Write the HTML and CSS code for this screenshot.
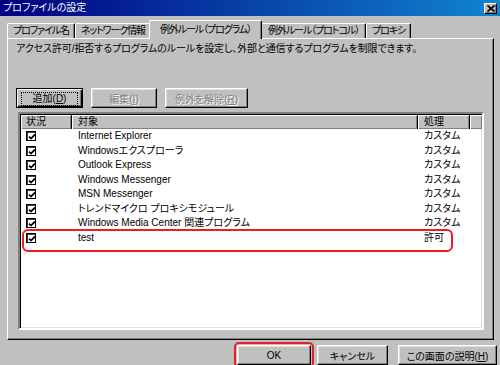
FILE: index.html
```html
<!DOCTYPE html>
<html lang="ja">
<head>
    <meta charset="utf-8">
    <title>プロファイルの設定</title>
    <link rel="stylesheet" href="styles.css">
</head>
<body>
<div class="window">
    <div class="titlebar">
        <span class="title">プロファイルの設定</span>
        <span class="close-btn">
            <svg width="8" height="7" viewBox="0 0 8 7"><path d="M0.5 0.5 L7.5 6.5 M7.5 0.5 L0.5 6.5" stroke="#000" stroke-width="1.6" fill="none"/></svg>
        </span>
    </div>

    <div class="tabs">
        <div class="tab">プロファイル名</div>
        <div class="tab">ネットワーク情報</div>
        <div class="tab active">例外ルール（プログラム）</div>
        <div class="tab tab-wide">例外ルール（プロトコル）</div>
        <div class="tab">プロキシ</div>
    </div>

    <div class="panel">
        <p class="desc">アクセス許可/拒否するプログラムのルールを設定し、外部と通信するプログラムを制限できます。</p>

        <div class="actions">
            <button class="btn btn-default btn-add"><span class="focus">追加(<u>D</u>)</span></button>
            <button class="btn btn-edit" disabled>編集(<u>I</u>)</button>
            <button class="btn btn-remove" disabled>例外を解除(<u>R</u>)</button>
        </div>

        <div class="list">
            <div class="list-head">
                <div class="hcell col-status">状況</div>
                <div class="hcell col-target">対象</div>
                <div class="hcell col-action">処理</div>
                <div class="hcell col-fill"></div>
            </div>
            <div class="row">
                <div class="col-status"><span class="check"></span></div>
                <div class="col-target">Internet Explorer</div>
                <div class="col-action">カスタム</div>
            </div>
            <div class="row">
                <div class="col-status"><span class="check"></span></div>
                <div class="col-target">Windowsエクスプローラ</div>
                <div class="col-action">カスタム</div>
            </div>
            <div class="row">
                <div class="col-status"><span class="check"></span></div>
                <div class="col-target">Outlook Express</div>
                <div class="col-action">カスタム</div>
            </div>
            <div class="row">
                <div class="col-status"><span class="check"></span></div>
                <div class="col-target">Windows Messenger</div>
                <div class="col-action">カスタム</div>
            </div>
            <div class="row">
                <div class="col-status"><span class="check"></span></div>
                <div class="col-target">MSN Messenger</div>
                <div class="col-action">カスタム</div>
            </div>
            <div class="row">
                <div class="col-status"><span class="check"></span></div>
                <div class="col-target">トレンドマイクロ プロキシモジュール</div>
                <div class="col-action">カスタム</div>
            </div>
            <div class="row">
                <div class="col-status"><span class="check"></span></div>
                <div class="col-target">Windows Media Center 関連プログラム</div>
                <div class="col-action">カスタム</div>
            </div>
            <div class="row marked">
                <div class="col-status"><span class="check"></span></div>
                <div class="col-target">test</div>
                <div class="col-action">許可</div>
            </div>
        </div>
    </div>

    <div class="footer">
        <div class="marked-btn"><button class="btn btn-ok">OK</button></div>
        <button class="btn btn-cancel">キャンセル</button>
        <button class="btn btn-help">この画面の説明(<u>H</u>)</button>
    </div>
</div>
</body>
</html>
```

FILE: styles.css
```css
* { box-sizing: border-box; }
body { margin: 0; background: #c0c0c0; color: #000; font: 10px "Liberation Sans", "Noto Sans CJK JP", sans-serif; font-feature-settings: "palt"; overflow: hidden; }
.window { width: 500px; height: 365px; }

/* title bar */
.titlebar { height: 16px; padding: 0 3px; display: flex; align-items: center; justify-content: space-between; background: linear-gradient(to right, #000080, #1084d0); color: #fff; }
.title { line-height: 16px; }
.close-btn { width: 13px; height: 11px; display: flex; align-items: center; justify-content: center; background: #c0c0c0; border: 1px solid; border-color: #fff #000 #000 #fff; box-shadow: inset -1px -1px #808080; }

/* tabs */
.tabs { height: 22px; padding-left: 7px; display: flex; align-items: flex-end; }
.tab { height: 15px; padding: 0 5px; line-height: 14px; letter-spacing: -1.1px; white-space: nowrap; background: #c0c0c0; border: 1px solid; border-bottom: none; border-color: #fff #000 #000 #fff; border-radius: 2px 2px 0 0; box-shadow: inset -1px 0 #808080; }
.tab.active { height: 19px; margin: 0 -2px -1px; padding: 2px 10px 0; position: relative; z-index: 1; }
.tab.tab-wide { padding: 0 6px 0 7px; }

.panel { width: 487px; height: 302px; margin-left: 7px; padding: 0 8px; border: 1px solid; border-color: #fff #000 #000 #fff; box-shadow: inset -1px -1px #808080; }
.desc { margin: 3px 0 0; line-height: 14px; letter-spacing: -0.1px; }

/* buttons */
.actions { display: flex; gap: 8px; margin-top: 32px; }
.btn { height: 20px; padding: 0; font: inherit; color: #000; background: #c0c0c0; border: 1px solid; border-color: #fff #000 #000 #fff; box-shadow: inset -1px -1px #808080, inset 1px 1px #dfdfdf; }
.btn:disabled { color: #808080; text-shadow: 1px 1px #fff; }
.btn-default { border-color: #000; box-shadow: inset 1px 1px #fff, inset -1px -1px #000, inset -2px -2px #808080; }
.btn-default .focus { display: block; margin: 3px 4px; line-height: 12px; border: 1px dotted #000; }
.btn-add { width: 67px; }
.btn-edit { width: 66px; }
.btn-remove { width: 83px; }

/* list */
.list { width: 466px; height: 218px; margin: 4px 0 0 2px; background: #fff; border: 2px solid; border-color: #808080 #fff #fff #808080; box-shadow: inset 1px 1px #000, inset -1px -1px #dfdfdf; padding: 1px 0 0 1px; }
.list-head { display: flex; height: 14px; background: #c0c0c0; }
.hcell { height: 14px; line-height: 13px; padding-left: 5px; border-right: 1px solid #000; box-shadow: inset 1px 1px #fff, inset -1px -1px #808080; }
.hcell.col-fill { flex: 1; border-right: none; }
.col-status { width: 51px; }
.col-target { width: 346px; padding-left: 6px; }
.col-action { width: 52px; padding-left: 6px; }
.row { height: 14.5px; display: flex; align-items: center; line-height: 14px; white-space: nowrap; }
.row .col-status { padding-left: 5px; display: flex; }
.check { width: 10px; height: 10px; background: #fff url("data:image/svg+xml,%3Csvg xmlns='http://www.w3.org/2000/svg' width='10' height='10'%3E%3Cpath d='M2 4.6 L4 6.6 L8 2.4' fill='none' stroke='%23000' stroke-width='1.7'/%3E%3C/svg%3E"); border: 1px solid #000; box-shadow: inset 1px 1px #404040; }

.row.marked { position: relative; }
.row.marked::after { content: ""; position: absolute; left: 1px; top: -2px; width: 427px; height: 19px; border: 2px solid #ee1c24; border-radius: 6px; }

/* footer */
.footer { display: flex; justify-content: flex-end; align-items: flex-start; gap: 6px; margin-top: 5px; padding-right: 3px; }
.marked-btn { position: relative; }
.marked-btn::after { content: ""; position: absolute; left: -3px; top: -3px; right: -3px; bottom: -3px; border: 2px solid #ee1c24; border-radius: 5px; }
.btn-ok { width: 74px; display: block; }
.btn-cancel { width: 71px; }
.btn-help { width: 99px; margin-left: 4px; }
```
